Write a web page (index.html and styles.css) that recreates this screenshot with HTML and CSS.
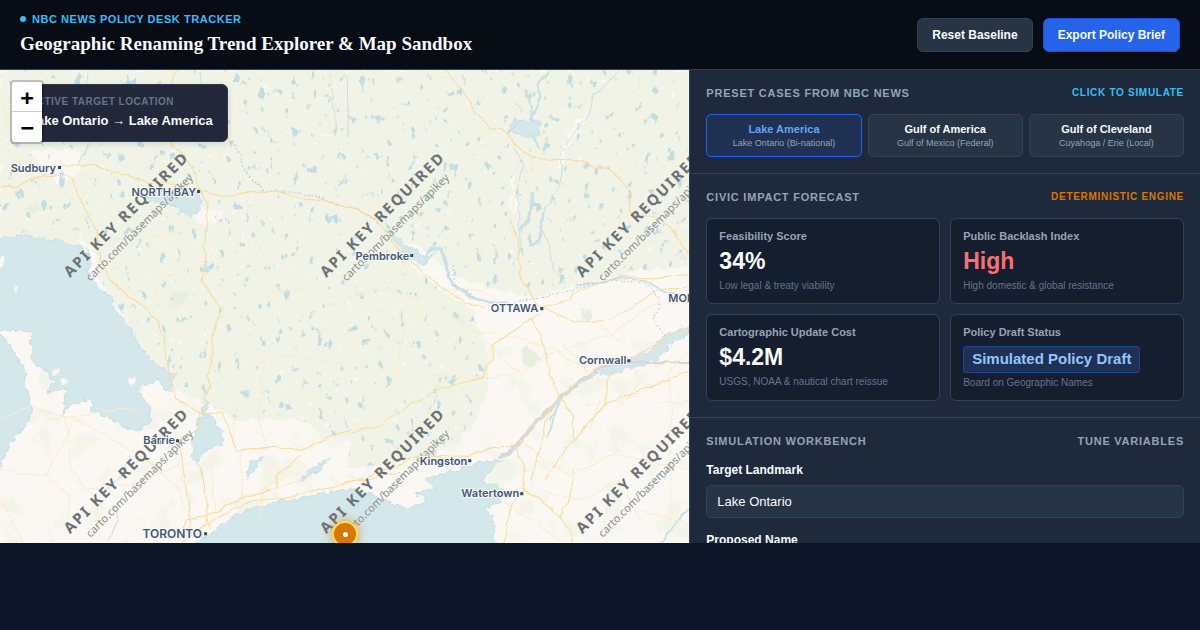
FILE: index.html
```html
<!DOCTYPE html>
<html lang="en">
<head>
<meta charset="utf-8">
<meta name="viewport" content="width=device-width, initial-scale=1">
<title>Geographic Renaming Trend Explorer</title>
<link rel="stylesheet" href="styles.css">
</head>
<body>
<header class="topbar">
  <div class="brand">
    <p class="eyebrow"><span class="eyebrow-dot"></span>NBC News Policy Desk Tracker</p>
    <h1 class="title">Geographic Renaming Trend Explorer &amp; Map Sandbox</h1>
  </div>
  <div class="actions">
    <button class="btn" type="button">Reset Baseline</button>
    <button class="btn btn-primary" type="button">Export Policy Brief</button>
  </div>
</header>

<main class="workspace">
  <section class="map" aria-label="Map">
    <svg class="map-canvas" viewBox="0 70 689 473" preserveAspectRatio="xMinYMin slice" aria-hidden="true">
      <defs>
        <filter id="lakes" x="0" y="0" width="100%" height="100%" color-interpolation-filters="sRGB">
          <feTurbulence type="fractalNoise" baseFrequency="0.12 0.08" numOctaves="4" seed="8"/>
          <feColorMatrix values="0 0 0 0 .75  0 0 0 0 .865  0 0 0 0 .89  12 0 0 0 -8.1" result="n"/>
          <feComposite in="n" in2="SourceGraphic" operator="in"/>
        </filter>
        <filter id="woods" x="0" y="0" width="100%" height="100%" color-interpolation-filters="sRGB">
          <feTurbulence type="fractalNoise" baseFrequency="0.035" numOctaves="5" seed="3"/>
          <feColorMatrix values="0 0 0 0 .94  0 0 0 0 .953  0 0 0 0 .90  9 0 0 0 -5" result="n"/>
          <feComposite in="n" in2="SourceGraphic" operator="in"/>
        </filter>
        <filter id="clearings" x="0" y="0" width="100%" height="100%" color-interpolation-filters="sRGB">
          <feTurbulence type="fractalNoise" baseFrequency="0.13" numOctaves="3" seed="21"/>
          <feColorMatrix values="0 0 0 0 .98  0 0 0 0 .97  0 0 0 0 .95  10 0 0 0 -7.1" result="n"/>
          <feComposite in="n" in2="SourceGraphic" operator="in"/>
        </filter>
        <filter id="coast" x="-5%" y="-5%" width="110%" height="110%">
          <feTurbulence type="fractalNoise" baseFrequency="0.13" numOctaves="3" seed="5"/>
          <feDisplacementMap in="SourceGraphic" scale="9" xChannelSelector="R" yChannelSelector="G"/>
        </filter>
        <filter id="wiggle" x="-5%" y="-5%" width="110%" height="110%">
          <feTurbulence type="fractalNoise" baseFrequency="0.07" numOctaves="2" seed="2"/>
          <feDisplacementMap in="SourceGraphic" scale="6" xChannelSelector="R" yChannelSelector="G"/>
        </filter>
        <path id="forest" d="M0 70H690V267L640 270 578 284 532 297 500 290 455 277 422 247 400 240 408 262 440 290 470 308 485 343 488 390 470 430 440 452 400 462 345 468 352 440 333 437 300 420 240 420 213 407 160 383 130 325 88 262 50 238 0 238Z"/>
      </defs>

      <rect class="land" x="0" y="70" width="1400" height="900"/>
      <rect x="0" y="340" width="690" height="204" filter="url(#woods)" opacity=".6"/>
      <g filter="url(#coast)"><use href="#forest" class="forest"/></g>
      <use href="#forest" filter="url(#clearings)"/>
      <g class="land" filter="url(#coast)">
        <path d="M30 150L60 148 82 152 80 172 60 184 45 170Z"/>
        <path d="M78 236L92 244 100 270 92 275 82 255Z"/>
        <path d="M190 205L222 212 220 222 195 225Z"/>
        <path d="M575 120L588 118 566 150 556 178 563 145Z"/>
        <path d="M512 165L516 190 518 210 509 212Z"/>
      </g>
      <g class="wood" filter="url(#coast)">
        <path d="M525 345l8 8 8 2-6 10-10 2-6-10z"/>
        <path d="M168 300l6-8 14 0 0 8-14 8zM25 207l12-4 4 6-12 5z"/>
        <path d="M582 308l10 2 0 8-10 2z"/>
      </g>
      <use href="#forest" filter="url(#lakes)"/>

      <g class="water" filter="url(#coast)">
        <path d="M-8 240L20 235 53 240 78 245 90 260 88 273 100 287 113 300 115 313 128 322 133 333 137 342 147 357 160 367 174 375 172 392 157 380 138 388 142 398 151 410 149 422 143 430 133 430 113 420 93 410 90 398 77 402 70 406 63 417 68 390 58 388 47 395 53 380 43 368 33 363 32 347 31 332 15 330-8 331Z"/>
        <path d="M-8 330L10 343 20 363 28 373 25 387 33 407 25 427 13 440 5 453-2 473-8 480Z"/>
        <path d="M190 549L213 533 230 517 240 512 267 503 300 498 320 493 350 489 372 493 392 503 408 509 428 500 415 493 435 487 425 478 445 475 458 470 472 463 502 460 488 473 482 483 495 483 502 490 500 503 485 507 493 517 496 549Z"/>
        <path d="M200 417L213 418 223 430 223 445 203 450 197 463 192 457 193 440Z"/>
        <path d="M143 195L170 190 197 193 203 203 190 217 177 207 160 203Z"/>
        <path d="M516 118L528 122 540 122 538 135 530 137 510 130Z"/>
        <path d="M394 233l14 14 14 10 12-2-10 9-20-10-12-16z"/>
        <path d="M598 370l30-12 20-5 14-16 28-12 0 10-22 10-12 15-26 8-30 8z"/>
        <path d="M205 398l4 18-5 2-2-10z"/>
        <path d="M302 478l14-14 14-6-6 8-18 12z"/>
        <path d="M246 474l6-14 10-4-4 10-10 10z"/>
        <path d="M204 262l4 0-1 10-4-2z"/>
      </g>
      <g class="land" filter="url(#coast)">
        <path d="M-5 258l10 0-2 8-8 4z"/>
        <path d="M128 378l6-2 2 6-6 4zM52 370l8-2 0 5-8 2zM60 380l6-2 1 6-5 1z"/>
        <circle cx="16" cy="290" r="2"/>
      </g>
      <g class="river" filter="url(#wiggle)">
        <path d="M424 258L430 248 442 250 446 268 452 284 470 297 488 302 510 304" stroke-width="3"/>
        <path d="M575 286L620 278 645 280 662 291 690 297" stroke-width="2"/>
        <path d="M598 372L578 383 558 400 535 423 515 447 500 458" stroke-width="4"/>
        <path d="M620 70L600 90 593 93 589 115 575 130 560 155 562 170 558 190 545 208 541 230 550 245 553 270 565 283"/>
        <path d="M515 150L521 165 517 195 519 225 520 245 517 262"/>
        <path d="M550 70L537 85 540 98 530 120M527 90L533 122M505 135L520 122M530 135L540 150" stroke-width="2"/>
        <path d="M532 193L528 220 520 232M544 211L538 240 530 246" stroke-width="3"/>
        <path d="M330 75L336 135M347 75L348 138M361 77L362 92" />
        <path d="M88 72L86 95 90 140 78 165M200 72L202 92M120 80L128 90"/>
        <path d="M130 455L120 475 112 485M115 505L118 520 108 540"/>
        <path d="M556 410L546 438M564 395L548 422M662 478L672 462M660 543L690 505" stroke-width="2"/>
      </g>

      <path class="boundary" filter="url(#wiggle)" d="M225 135L240 155 245 172 263 190 280 192 300 192 340 205 365 213 380 225 390 233M452 265L455 285 475 297M510 304L570 290 610 280 645 283 660 300 653 320 665 336"/>
      <path class="border" filter="url(#wiggle)" d="M498 458L515 445 535 425 558 400 578 382 600 367 630 361 690 363"/>

      <g class="road minor" filter="url(#wiggle)">
        <path d="M100 240L165 236 200 225M160 278L204 266M160 278L156 297 165 306M225 320L245 312 275 292 300 288 345 300 370 292M213 365L250 350 290 356 350 365"/>
        <path d="M268 350L260 390 258 420 268 450M45 418L65 418 120 408 140 412M65 418L72 470 95 500 100 540M0 420L32 405 65 418"/>
        <path d="M72 492L130 484 180 465M45 475L70 495 68 518M0 500L22 540M0 470L45 476 75 418 140 455 180 490 185 510"/>
        <path d="M232 443L235 420 228 415M210 452L215 515M240 450L243 500M277 465L280 475 262 490 260 515M240 496L270 490 300 480"/>
        <path d="M325 92L345 115M150 92L148 120 175 128M225 84L232 130 210 180M172 92L172 72M0 90L10 130 30 145"/>
        <path d="M517 160L513 205 508 222 518 262M522 172L530 170 532 155"/>
        <path d="M345 352L385 336 400 345 398 375 360 410M400 345L410 310 440 305 470 330 500 335M430 375L490 378 520 372"/>
        <path d="M485 340L520 375 555 350 600 380M560 340L585 370M600 325L625 345M505 335L560 350 610 335 660 300"/>
        <path d="M575 405L605 405 640 393M690 350L668 372 672 410 668 440 672 520M660 405L690 400M590 430L600 400"/>
        <path d="M520 440L545 460 570 475 620 450M545 492L580 500 620 480 640 520M500 500L560 540M640 510L690 525M620 455L690 470M625 400L640 380"/>
        <path d="M345 300L370 288 420 298 445 290 480 290 500 302M400 255L412 280 420 320 455 345"/>
      </g>
      <g class="road" filter="url(#wiggle)">
        <path d="M0 188L15 187 30 178 55 175 68 175 76 188 80 202 97 230 98 250 108 275 118 288 143 307 158 323 165 345 169 375 177 397 190 408 200 413"/>
        <path d="M60 166L80 166 90 163 110 171 150 182 180 185 200 190 208 205 207 225 205 255 202 280 215 300 220 315 212 335 212 360 208 375 211 385 200 413 198 430 180 440"/>
        <path d="M175 70L172 82 165 95 168 140 185 157 197 173 198 190 225 197 250 193 275 191 300 198 330 202 345 207 365 212 378 222 395 245 410 260 425 275 445 290 460 300 485 309"/>
        <path d="M445 70L457 85 465 93 475 113 490 128 500 128 523 153 540 159 580 160 595 168 608 168 622 180 630 195 630 213 640 217 655 217 670 227 682 245 690 255"/>
        <path d="M510 220L518 240 520 275 535 300 541 308"/>
        <path d="M180 440L183 470 188 500 190 530M200 465L207 510 210 530M180 540L185 520 215 512 240 498 270 490"/>
        <path d="M175 548L200 528 228 512 255 500 285 498 310 492 345 484 370 475 420 455 470 456"/>
        <path d="M200 413L220 413 228 425 234 450 270 447 300 450 330 436 350 430"/>
        <path d="M345 435L380 425 410 405 440 388 480 378 492 360 492 345 515 330 541 312"/>
        <path d="M470 455L490 448 520 444 535 425 560 398 580 380 610 360 628 357 650 350 670 335 690 327"/>
        <path d="M541 308L570 300 572 293 600 283 620 276 650 278 690 274M541 308L575 322 610 320 640 302 655 290 690 287M532 318L545 350 547 365 558 395 573 415 573 440 558 460 545 480"/>
        <path d="M516 448L524 470 524 490 510 505 508 528 503 545M524 490L545 502 560 518 570 530 572 543M560 395L545 420 540 450 530 480"/>
        <path d="M573 440L605 405 625 395 670 380 690 370M605 405L606 380 612 370M560 518L572 490 573 470"/>
        <path d="M345 483L400 472M275 490L277 475 300 455"/>
      </g>

      <g class="watermark">
        <g id="stamp">
          <text class="stamp-title" transform="translate(130 218) rotate(-45)">API KEY REQUIRED</text>
          <text class="stamp-url" transform="translate(142 230) rotate(-45)">carto.com/basemaps/apikey</text>
        </g>
        <use href="#stamp" x="256"/>
        <use href="#stamp" x="512"/>
        <use href="#stamp" y="256"/>
        <use href="#stamp" x="256" y="256"/>
        <use href="#stamp" x="512" y="256"/>
      </g>

      <g class="places">
        <text x="56" y="172">Sudbury</text>
        <text x="196" y="196">NORTH BAY</text>
        <text x="409" y="260">Pembroke</text>
        <text x="626" y="364">Cornwall</text>
        <text x="175" y="444">Barrie</text>
        <text x="467" y="465">Kingston</text>
        <text x="519" y="497">Watertown</text>
        <text x="538" y="312">OTTAWA</text>
        <text class="city" x="202" y="538">TORONTO</text>
        <text class="start" x="668" y="302">MONTRÉAL</text>
      </g>
      <path class="place-dots" d="M58 166h3v3h-3zM197 190h3v3h-3zM410 254h3v3h-3zM627 359h3v3h-3zM176 439h3v3h-3zM468 459h3v3h-3zM520 492h3v3h-3zM540 307h3v3h-3zM204 532h3v3h-3z"/>
    </svg>

    <div class="target-card">
      <p class="target-label">Active Target Location</p>
      <p class="target-value">Lake Ontario → Lake America</p>
    </div>
    <div class="zoom-control">
      <a class="zoom-link" href="#zoom-in" aria-label="Zoom in">+</a>
      <a class="zoom-link" href="#zoom-out" aria-label="Zoom out">−</a>
    </div>
    <div class="marker"><span class="marker-dot"></span></div>
  </section>

  <aside class="panel">
    <section class="block">
      <div class="block-head">
        <h2 class="block-title">Preset Cases from NBC News</h2>
        <span class="block-note note-sky">Click to Simulate</span>
      </div>
      <div class="presets">
        <button class="preset is-active" type="button"><strong class="preset-name">Lake America</strong><span class="preset-sub">Lake Ontario (Bi-national)</span></button>
        <button class="preset" type="button"><strong class="preset-name">Gulf of America</strong><span class="preset-sub">Gulf of Mexico (Federal)</span></button>
        <button class="preset" type="button"><strong class="preset-name">Gulf of Cleveland</strong><span class="preset-sub">Cuyahoga / Erie (Local)</span></button>
      </div>
    </section>

    <section class="block">
      <div class="block-head">
        <h2 class="block-title">Civic Impact Forecast</h2>
        <span class="block-note note-amber">Deterministic Engine</span>
      </div>
      <div class="metrics">
        <article class="metric">
          <h3 class="metric-label">Feasibility Score</h3>
          <p class="metric-value">34%</p>
          <p class="metric-sub">Low legal &amp; treaty viability</p>
        </article>
        <article class="metric">
          <h3 class="metric-label">Public Backlash Index</h3>
          <p class="metric-value is-high">High</p>
          <p class="metric-sub">High domestic &amp; global resistance</p>
        </article>
        <article class="metric">
          <h3 class="metric-label">Cartographic Update Cost</h3>
          <p class="metric-value">$4.2M</p>
          <p class="metric-sub">USGS, NOAA &amp; nautical chart reissue</p>
        </article>
        <article class="metric">
          <h3 class="metric-label">Policy Draft Status</h3>
          <p class="status">Simulated Policy Draft</p>
          <p class="metric-sub">Board on Geographic Names</p>
        </article>
      </div>
    </section>

    <section class="block">
      <div class="block-head">
        <h2 class="block-title">Simulation Workbench</h2>
        <span class="block-title">Tune Variables</span>
      </div>
      <form class="form">
        <div class="field">
          <label class="field-label" for="landmark">Target Landmark</label>
          <input class="field-input" id="landmark" type="text" value="Lake Ontario">
        </div>
        <div class="field">
          <label class="field-label" for="proposed">Proposed Name</label>
          <input class="field-input" id="proposed" type="text" value="Lake America">
        </div>
      </form>
    </section>
  </aside>
</main>
</body>
</html>
```
FILE: styles.css
```css
* { box-sizing: border-box; }

body {
  margin: 0;
  background: #0d1628;
  color: #f8fafc;
  font-family: "Liberation Sans", Arial, sans-serif;
}

h1, h2, h3, p { margin: 0; }
button, input { font-family: inherit; }

.topbar {
  display: flex;
  align-items: center;
  justify-content: space-between;
  min-height: 70px;
  padding: 10px 20px;
  background: #070c15;
  border-bottom: 1px solid #334155;
}
.brand { padding-bottom: 2px; }
.eyebrow {
  display: flex;
  align-items: center;
  gap: 6px;
  margin-bottom: 4px;
  color: #38bdf8;
  font-size: 11px;
  font-weight: 700;
  line-height: 16px;
  letter-spacing: 0.05em;
  text-transform: uppercase;
}
.eyebrow-dot {
  width: 6px;
  height: 6px;
  border-radius: 50%;
  background: #38bdf8;
}
.title {
  font-family: "Liberation Serif", "Times New Roman", serif;
  font-size: 19px;
  line-height: 26px;
}
.actions { display: flex; gap: 10px; }
.btn {
  padding: 0 14px;
  border: 1px solid #334155;
  border-radius: 6px;
  background: #263446;
  color: #f8fafc;
  font-size: 12px;
  font-weight: 700;
  line-height: 32px;
}
.btn-primary { background: #2563eb; border-color: #1d4ed8; }

.workspace {
  display: grid;
  grid-template-columns: 1.35fr 1fr;
  height: 75vh;
  overflow: hidden;
}

.map {
  position: relative;
  overflow: hidden;
  background: #fbf8f3;
}
.map-canvas { display: block; width: 100%; height: 100%; }
.land { fill: #fbf8f3; }
.forest { fill: #f0f3e6; }
.wood { fill: #e9efdf; }
.water { fill: #d4e8ec; stroke: #c6dfe6; stroke-width: 1; }
.river { fill: none; stroke: #c9e0e6; stroke-width: 1; }
.road {
  fill: none;
  stroke: #fbd995;
  stroke-width: 1;
  stroke-linejoin: round;
}
.minor { stroke: #fbebcd; }
.boundary { fill: none; stroke: #c3cad2; stroke-dasharray: 2 2; }
.border { fill: none; stroke: #e0d0d8; stroke-width: 2; }
.watermark { font-family: "Noto Sans", sans-serif; text-anchor: middle; }
.stamp-title {
  fill: #6a7177;
  font-size: 15px;
  font-weight: 700;
  letter-spacing: 2px;
}
.stamp-url { fill: #898f93; font-size: 11px; }
.places {
  fill: #40597a;
  stroke: #fbf8f3;
  stroke-width: 2px;
  paint-order: stroke;
  font-family: Inter, sans-serif;
  font-size: 11px;
  font-weight: 600;
  text-anchor: end;
}
.city { font-size: 12px; }
.start { text-anchor: start; }
.place-dots { fill: #2f4a6d; }

.target-card {
  position: absolute;
  top: 14px;
  left: 14px;
  padding: 10px 14px;
  border: 1px solid #2c3a4f;
  border-radius: 6px;
  background: #22273a;
  box-shadow: 0 2px 6px rgba(0, 0, 0, 0.12);
}
.target-label {
  margin-bottom: 2px;
  color: #64748b;
  font-size: 10px;
  font-weight: 700;
  line-height: 14px;
  letter-spacing: 0.05em;
  text-transform: uppercase;
}
.target-value { font-size: 13px; font-weight: 700; line-height: 20px; }

.zoom-control {
  position: absolute;
  top: 10px;
  left: 10px;
  border: 2px solid rgba(0, 0, 0, 0.2);
  border-radius: 4px;
  background: #fff;
  background-clip: padding-box;
}
.zoom-link {
  display: block;
  width: 30px;
  height: 30px;
  border-bottom: 1px solid #ccc;
  color: #000;
  font: 700 22px/32px "DejaVu Sans Mono", monospace;
  text-align: center;
  text-decoration: none;
}
.zoom-link:last-child { border-bottom: 0; }

.marker {
  position: absolute;
  top: 451px;
  left: 332px;
  display: grid;
  place-items: center;
  width: 26px;
  height: 26px;
  border: 2px solid #fde047;
  border-radius: 50%;
  background: #d97706;
  box-shadow: 0 0 12px rgba(217, 119, 6, 0.7);
}
.marker-dot { width: 5px; height: 5px; border-radius: 50%; background: #fff; }

.panel {
  min-width: 0;
  overflow: hidden;
  border-left: 1px solid #334155;
  background: #1e293b;
}
.block { padding: 16px; border-bottom: 1px solid #334155; }
.block-head {
  display: flex;
  align-items: center;
  justify-content: space-between;
  margin-bottom: 14px;
  line-height: 14px;
  text-transform: uppercase;
}
.block-title {
  color: #94a3b8;
  font-size: 11px;
  font-weight: 700;
  letter-spacing: 0.07em;
}
.block-note { font-size: 10px; font-weight: 700; letter-spacing: 0.07em; }
.note-sky { color: #38bdf8; }
.note-amber { color: #d97706; }

.presets { display: grid; grid-template-columns: repeat(3, 1fr); gap: 6px; }
.preset {
  padding: 8px 4px;
  border: 1px solid #334155;
  border-radius: 5px;
  background: #263446;
  color: #f8fafc;
  text-align: center;
}
.preset-name { display: block; font-size: 11px; line-height: 13px; }
.preset-sub {
  display: block;
  padding-top: 2px;
  color: #94a3b8;
  font-size: 9px;
  line-height: 10px;
}
.preset.is-active { border-color: #2563eb; background: #213154; }
.is-active .preset-name { color: #60a5fa; }

.metrics { display: grid; grid-template-columns: repeat(2, 1fr); gap: 10px; }
.metric {
  padding: 10px 12px;
  border: 1px solid #334155;
  border-radius: 6px;
  background: #151e2e;
}
.metric-label { color: #94a3b8; font-size: 11px; line-height: 15px; }
.metric-value {
  margin: 3px 0 4px;
  font-size: 23px;
  font-weight: 700;
  line-height: 28px;
}
.is-high { color: #f87171; }
.metric-sub { color: #64748b; font-size: 10px; line-height: 14px; }
.status {
  width: fit-content;
  margin: 6px 0 3px;
  padding: 0 8px 1px;
  border: 1px solid #1e4690;
  border-radius: 3px;
  background: #1e3053;
  color: #93c5fd;
  font-size: 15px;
  font-weight: 700;
  line-height: 24px;
}

.form { display: grid; gap: 14px; }
.field { display: grid; gap: 7px; }
.field-label {
  padding-top: 1px;
  font-size: 12px;
  font-weight: 700;
  line-height: 15px;
}
.field-input {
  width: 100%;
  height: 33px;
  padding: 0 10px;
  border: 1px solid #334155;
  border-radius: 5px;
  background: #263446;
  color: #f8fafc;
  font-size: 13px;
}
```
